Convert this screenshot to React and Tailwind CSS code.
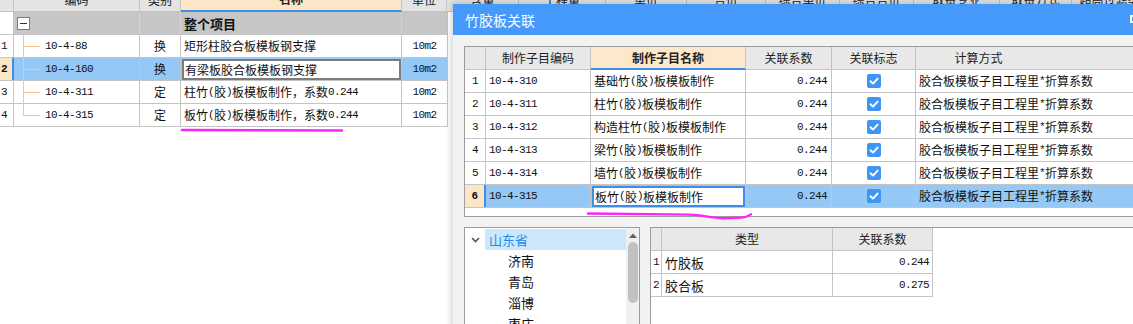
import React from "react";

const ASC = "font-['Liberation_Mono',monospace] text-[11px] tracking-[-0.6px]";

function M({ t }) {
  const parts = t.split(/([\x20-\x7e]+)/).filter(Boolean);
  return (
    <>
      {parts.map((p, i) =>
        /^[\x20-\x7e]+$/.test(p) ? (
          <span key={i} className={ASC}>{p}</span>
        ) : (
          <span key={i}>{p}</span>
        )
      )}
    </>
  );
}

function Check() {
  return (
    <div className="w-[14px] h-[14px] rounded-[2px] bg-[#3f95f3] flex items-center justify-center">
      <svg width="10" height="10" viewBox="0 0 10 10">
        <path d="M1.5 5.2 L4 7.6 L8.6 2.6" stroke="white" strokeWidth="1.9" fill="none" strokeLinecap="round" strokeLinejoin="round" />
      </svg>
    </div>
  );
}

const bgRows = [
  { n: "1", code: "10-4-88", type: "换", name: "矩形柱胶合板模板钢支撑" },
  { n: "2", code: "10-4-160", type: "换", name: "有梁板胶合板模板钢支撑", sel: true },
  { n: "3", code: "10-4-311", type: "定", name: "柱竹(胶)板模板制作，系数0.244" },
  { n: "4", code: "10-4-315", type: "定", name: "板竹(胶)板模板制作，系数0.244", last: true },
];

const dlgRows = [
  { n: "1", code: "10-4-310", name: "基础竹(胶)板模板制作" },
  { n: "2", code: "10-4-311", name: "柱竹(胶)板模板制作" },
  { n: "3", code: "10-4-312", name: "构造柱竹(胶)板模板制作" },
  { n: "4", code: "10-4-313", name: "梁竹(胶)板模板制作" },
  { n: "5", code: "10-4-314", name: "墙竹(胶)板模板制作" },
  { n: "6", code: "10-4-315", name: "板竹(胶)板模板制作", sel: true },
];

export default function App() {
  return (
    <div className="relative w-[1133px] h-[324px] overflow-hidden bg-white text-[12px] text-[#111] font-['Noto_Sans_CJK_SC',sans-serif] leading-none">
      {/* background table */}
      <div className="flex flex-col">
        <div className="flex h-[24px] -mt-[12px] bg-[#e4e4e4] text-[#222] w-[1200px]">
          <div className="w-[14px] border-r border-b border-[#c4c4c4]" />
          <div className="w-[126px] border-r border-b border-[#c4c4c4] flex items-center justify-center">编码</div>
          <div className="w-[41px] border-r border-b border-[#c4c4c4] flex items-center justify-center">类别</div>
          <div className="w-[221px] border-r border-[#c4c4c4] border-b-2 border-b-[#3d8ee8] bg-[#fde6c6] font-bold flex items-center justify-center">名称</div>
          <div className="w-[45px] border-r border-b border-[#c4c4c4] flex items-center justify-center">单位</div>
          <div className="w-[72px] border-r border-b border-[#c4c4c4] flex items-center justify-center">含量</div>
          <div className="w-[87px] border-r border-b border-[#c4c4c4] flex items-center justify-center">工程量</div>
          <div className="w-[81px] border-r border-b border-[#c4c4c4] flex items-center justify-center">单价</div>
          <div className="w-[79px] border-r border-b border-[#c4c4c4] flex items-center justify-center">合价</div>
          <div className="w-[74px] border-r border-b border-[#c4c4c4] flex items-center justify-center">综合单价</div>
          <div className="w-[74px] border-r border-b border-[#c4c4c4] flex items-center justify-center">综合合价</div>
          <div className="w-[86px] border-r border-b border-[#c4c4c4] flex items-center justify-center">取费专业</div>
          <div className="w-[72px] border-r border-b border-[#c4c4c4] flex items-center justify-center">取费方式</div>
          <div className="w-[88px] border-r border-b border-[#c4c4c4] flex items-center justify-center">超高过滤类别</div>
        </div>

        {/* root row */}
        <div className="flex h-[23px] w-[448px] border-b border-[#c4c4c4]">
          <div className="w-[14px] border-r border-[#c4c4c4] bg-white" />
          <div className="relative w-[126px] border-r border-[#d2d2d2] bg-[#c6c6c6]">
            <div className="absolute left-[3px] top-[5px] w-[13px] h-[13px] border border-[#7a7a7a] bg-white flex items-center justify-center">
              <div className="w-[7px] h-px bg-[#333]" />
            </div>
            <div className="absolute left-[9px] top-[18px] bottom-0 w-px bg-[#f5c88a]" />
          </div>
          <div className="w-[41px] border-r border-[#d2d2d2] bg-[#c6c6c6]" />
          <div className="w-[221px] border-r border-[#d2d2d2] bg-[#c6c6c6] flex items-center pl-[3px] font-bold text-[13px]">整个项目</div>
          <div className="w-[46px] bg-[#c6c6c6] border-r border-[#c4c4c4]" />
        </div>

        {bgRows.map((r) => (
          <div key={r.n} className={`flex h-[23px] w-[448px] border-b border-[#c4c4c4] ${r.sel ? "bg-[#96c8f5]" : "bg-white"}`}>
            <div className={r.sel ? "w-[14px] bg-[#fde6c6] border-r-2 border-[#3d8ee8] flex items-center font-bold pl-px" : "w-[14px] border-r border-[#c4c4c4] flex items-center pl-px"}>
              <span className={ASC}>{r.n}</span>
            </div>
            <div className="relative w-[126px] border-r border-[#c4c4c4] flex items-center pl-[31px]">
              <div className={r.last ? "absolute left-[9px] top-0 h-[12px] w-px bg-[#f5c88a]" : "absolute left-[9px] top-0 bottom-[-1px] w-px bg-[#f5c88a]"} />
              <div className="absolute left-[9px] top-[11px] w-[17px] h-px bg-[#f5c88a]" />
              <M t={r.code} />
            </div>
            <div className="w-[41px] border-r border-[#c4c4c4] flex items-center justify-center">{r.type}</div>
            {r.sel ? (
              <div className="w-[221px] border-r border-[#c4c4c4] pl-px pt-px">
                <div className="h-full border-2 border-[#7d7d7d] bg-white flex items-center pl-px">
                  <M t={r.name} />
                </div>
              </div>
            ) : (
              <div className="w-[221px] border-r border-[#c4c4c4] flex items-center pl-[3px]">
                <M t={r.name} />
              </div>
            )}
            <div className="w-[46px] border-r border-[#c4c4c4] flex items-center justify-center">
              <M t="10m2" />
            </div>
          </div>
        ))}
      </div>

      {/* dialog */}
      <div className="absolute left-[453px] top-[4px] w-[700px] h-[340px] flex flex-col bg-[#f2f2f2] shadow-[0_0_6px_2px_rgba(0,0,0,0.16)]">
        <div className="relative h-[31px] bg-[#4499fb] flex items-center pl-[12px] text-white text-[14px]">
          竹胶板关联
          <div className="absolute left-[677px] top-[11px] w-[9px] h-[8px] border-2 border-white" />
        </div>
        <div className="flex-1 flex flex-col pt-[11px] pl-[11px] pr-[11px]">
          <div className="h-[171px] border border-[#9c9c9c] bg-white flex flex-col">
            <div className="flex h-[23px] bg-[#e8e8e8] text-[#222]">
              <div className="w-[21px] border-r border-b border-[#c4c4c4]" />
              <div className="w-[105px] border-r border-b border-[#c4c4c4] flex items-center justify-center">制作子目编码</div>
              <div className="w-[155px] border-r border-[#c4c4c4] border-b-2 border-b-[#3d8ee8] bg-[#fde8cc] font-bold flex items-center justify-center">制作子目名称</div>
              <div className="w-[86px] border-r border-b border-[#c4c4c4] flex items-center justify-center">关联系数</div>
              <div className="w-[84px] border-r border-b border-[#c4c4c4] flex items-center justify-center">关联标志</div>
              <div className="flex-1 border-b border-[#c4c4c4] flex items-center justify-center pr-[100px]">计算方式</div>
            </div>
            {dlgRows.map((r) => (
              <div key={r.n} className={`flex h-[23px] border-b border-[#c4c4c4] ${r.sel ? "bg-[#96c8f5]" : "bg-white"}`}>
                <div className={r.sel ? "w-[21px] bg-[#fde6c6] border-r-2 border-[#3d8ee8] flex items-center justify-center font-bold" : "w-[21px] border-r border-[#c4c4c4] flex items-center justify-center"}>
                  <span className={ASC}>{r.n}</span>
                </div>
                <div className="w-[105px] border-r border-[#c4c4c4] flex items-center pl-[3px]">
                  <M t={r.code} />
                </div>
                {r.sel ? (
                  <div className="w-[155px] border-r border-[#c4c4c4] pl-px pt-px">
                    <div className="h-full border-2 border-[#3d8ee8] bg-white flex items-center pl-px">
                      <M t={r.name} />
                    </div>
                  </div>
                ) : (
                  <div className="w-[155px] border-r border-[#c4c4c4] flex items-center pl-[3px]">
                    <M t={r.name} />
                  </div>
                )}
                <div className="w-[86px] border-r border-[#c4c4c4] flex items-center justify-end pr-[4px]">
                  <M t="0.244" />
                </div>
                <div className="w-[84px] border-r border-[#c4c4c4] flex items-center justify-center">
                  <Check />
                </div>
                <div className="flex-1 flex items-center pl-[3px]">
                  <M t="胶合板模板子目工程里*折算系数" />
                </div>
              </div>
            ))}
          </div>

          <div className="flex gap-[10px] mt-[10px] flex-1">
            {/* tree panel */}
            <div className="w-[176px] border border-[#9c9c9c] bg-white flex">
              <div className="flex-1 flex flex-col pt-px">
                <div className="flex h-[21px]">
                  <div className="w-[20px] flex items-center justify-center">
                    <svg width="9" height="6" viewBox="0 0 9 6">
                      <path d="M1 1 L4.5 4.5 L8 1" stroke="#555" strokeWidth="1.6" fill="none" />
                    </svg>
                  </div>
                  <div className="flex-1 bg-[#cce6fb] flex items-center pl-[4px] text-[#1a8cf0] text-[13px]">山东省</div>
                </div>
                {["济南", "青岛", "淄博", "枣庄"].map((c) => (
                  <div key={c} className="h-[21px] flex items-center pl-[43px] text-[13px]">{c}</div>
                ))}
              </div>
              <div className="w-[13px] bg-[#f0f0f0] flex flex-col items-center">
                <div className="h-[14px] flex items-center justify-center">
                  <svg width="8" height="5" viewBox="0 0 8 5">
                    <path d="M0 5 L4 0.5 L8 5 Z" fill="#606060" />
                  </svg>
                </div>
                <div className="w-[10px] h-[61px] rounded-full bg-[#c1c1c1]" />
              </div>
            </div>
            {/* type grid */}
            <div className="flex-1 border-l border-t border-[#9c9c9c] bg-white flex flex-col">
              <div className="flex h-[23px] text-[#222]">
                <div className="w-[11px] bg-[#e8e8e8] border-r border-b border-[#c4c4c4]" />
                <div className="w-[171px] bg-[#e8e8e8] border-r border-b border-[#c4c4c4] flex items-center justify-center">类型</div>
                <div className="w-[100px] bg-[#e8e8e8] border-r border-b border-[#c4c4c4] flex items-center justify-center">关联系数</div>
              </div>
              {[
                ["1", "竹胶板", "0.244"],
                ["2", "胶合板", "0.275"],
              ].map(([n, t, v]) => (
                <div key={n} className="flex h-[23px]">
                  <div className="w-[11px] border-r border-b border-[#c4c4c4] flex items-center justify-center">
                    <span className={ASC}>{n}</span>
                  </div>
                  <div className="w-[171px] border-r border-b border-[#c4c4c4] flex items-center pl-[3px] text-[13px]">{t}</div>
                  <div className="w-[100px] border-r border-b border-[#c4c4c4] flex items-center justify-end pr-[3px]">
                    <M t={v} />
                  </div>
                </div>
              ))}
            </div>
          </div>
        </div>
      </div>

      {/* annotation marks */}
      <svg className="absolute left-0 top-0 pointer-events-none" width="1133" height="324">
        <path d="M182 130 L342 130.5" stroke="#ff22ff" strokeWidth="2.6" fill="none" strokeLinecap="round" />
        <path d="M588 213.5 L690 214.6 C703 215, 711 218.3, 724 218.2 L741 217.6 C747 217.3, 749 215.5, 751 214.2" stroke="#ff22ff" strokeWidth="2.4" fill="none" strokeLinecap="round" />
      </svg>
    </div>
  );
}
